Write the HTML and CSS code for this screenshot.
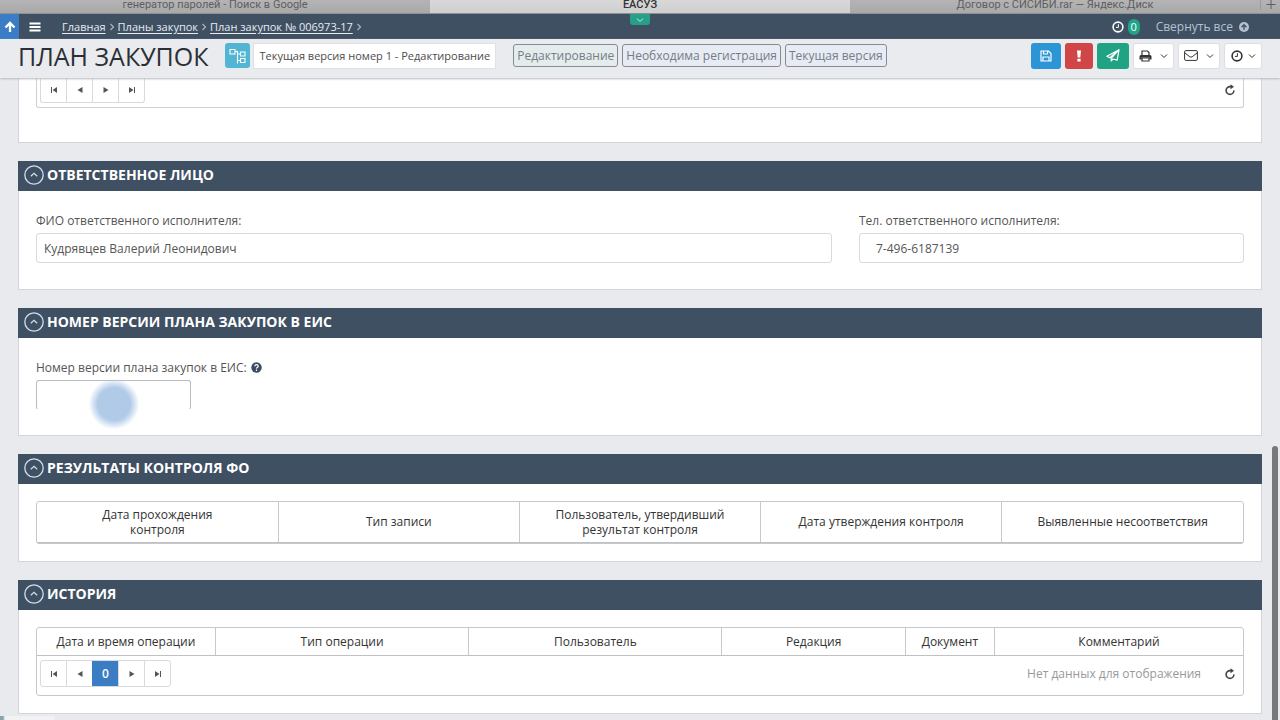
FILE: index.html
```
<!DOCTYPE html>
<html lang="ru">
<head>
<meta charset="utf-8">
<meta name="viewport" content="width=device-width, initial-scale=1">
<title>ЕАСУЗ</title>
<link rel="stylesheet" href="styles.css">
</head>
<body>
<svg class="sprite" aria-hidden="true">
  <symbol id="chev-right" viewBox="0 0 6 8"><path d="M1.5 1l3 3-3 3" fill="none" stroke="currentColor" stroke-width="1.2"/></symbol>
  <symbol id="chev-down" viewBox="0 0 8 6"><path d="M1 1.500l3 3 3-3" fill="none" stroke="currentColor" stroke-width="1"/></symbol>
  <symbol id="clock" viewBox="0 0 12 12"><circle cx="6" cy="6" r="4.900" fill="none" stroke="currentColor" stroke-width="1.600"/><path d="M6.400 3.200v3.200H4" fill="none" stroke="currentColor" stroke-width="1"/></symbol>
  <symbol id="first" viewBox="0 0 8 8"><path d="M1.500 1v6" stroke="currentColor"/><path d="M7 1v6L2.500 4z" fill="currentColor"/></symbol>
  <symbol id="prev" viewBox="0 0 8 8"><path d="M6.500 1v6l-5-3z" fill="currentColor"/></symbol>
  <symbol id="next" viewBox="0 0 8 8"><path d="M1.500 1v6l5-3z" fill="currentColor"/></symbol>
  <symbol id="last" viewBox="0 0 8 8"><path d="M6.500 1v6" stroke="currentColor"/><path d="M1 1v6l4.500-3z" fill="currentColor"/></symbol>
  <symbol id="reload" viewBox="0 0 12 12"><path d="M7.500 2.600H6A3.900 3.900 0 1 0 9.900 6.500" fill="none" stroke="currentColor" stroke-width="1.600"/><path d="M6.500 0.200L10 2.700 6.500 5.200z" fill="currentColor"/></symbol>
  <symbol id="collapse" viewBox="0 0 20 20"><circle cx="10" cy="10" r="9.200" fill="none" stroke="currentColor" stroke-width="1.300"/><path d="M6.800 11.300L10 8.300l3.200 3" fill="none" stroke="currentColor" stroke-width="1.200"/></symbol>
</svg>

<nav class="tabs" aria-label="Вкладки">
  <a class="tab tab-first" href="#">генератор паролей - Поиск в Google</a>
  <a class="tab tab-active" href="#">ЕАСУЗ</a>
  <a class="tab" href="#">Договор с СИСИБИ.rar — Яндекс.Диск</a>
  <button class="tab-add" aria-label="Новая вкладка"><svg width="10" height="10" viewBox="0 0 10 10"><path d="M5 0v9M0.500 4.500h9" stroke="currentColor"/></svg></button>
</nav>

<div class="navbar">
  <button class="to-top" aria-label="Наверх"><svg width="12" height="12" viewBox="0 0 12 12"><path d="M6 11V2.500M1.500 6.500L6 2l4.500 4.500" fill="none" stroke="currentColor" stroke-width="2.300"/></svg></button>
  <button class="burger" aria-label="Меню"><svg width="12" height="12" viewBox="0 0 12 12"><path d="M0.500 2.500h11M0.500 6h11M0.500 9.500h11" stroke="currentColor" stroke-width="1.900"/></svg></button>
  <nav class="crumbs" aria-label="Навигация">
    <a href="#">Главная</a><svg width="6" height="8"><use href="#chev-right"/></svg>
    <a href="#">Планы закупок</a><svg width="6" height="8"><use href="#chev-right"/></svg>
    <a href="#">План закупок № 006973-17</a><svg width="6" height="8"><use href="#chev-right"/></svg>
  </nav>
  <button class="pull" aria-label="Развернуть"><svg width="8" height="6"><use href="#chev-down"/></svg></button>
  <svg class="nav-clock" width="12" height="12"><use href="#clock"/></svg>
  <span class="count">0</span>
  <button class="collapse-all">Свернуть все <svg width="10" height="10" viewBox="0 0 10 10"><circle cx="5" cy="5" r="5" fill="currentColor"/><path d="M5 8V3M2.500 5.200L5 2.700l2.500 2.500" fill="none" stroke="#405063" stroke-width="1.300"/></svg></button>
</div>

<header class="head">
  <h1>ПЛАН ЗАКУПОК</h1>
  <button class="tree" aria-label="Версии"><svg width="18" height="18" viewBox="0 0 18 18"><path d="M1 2.500h5v4.500H1zM11.500 5h4.500v4h-4.500zM11.500 11.500h4.500v4h-4.500zM6 4.500h2.500v12M8.500 7h3M8.500 13.500h3" fill="none" stroke="currentColor" stroke-width="1.100"/></svg></button>
  <button class="version">Текущая версия номер 1 - Редактирование</button>
  <div class="statuses">
    <span class="status status-edit">Редактирование</span>
    <span class="status">Необходима регистрация</span>
    <span class="status">Текущая версия</span>
  </div>
  <div class="tools">
    <button class="tool save" aria-label="Сохранить"><svg width="12" height="12" viewBox="0 0 12 12"><path d="M1 1h7.500L11 3.500V11H1zM3.500 1v3h4V1M3 11V7h6v4" fill="none" stroke="currentColor" stroke-width="1.200"/></svg></button>
    <button class="tool warn" aria-label="Проверить"><svg width="6" height="12" viewBox="0 0 6 12"><path d="M1 0.500h4L4.300 7.500H1.700zM1.400 8.700h3.200v2.800H1.400z" fill="currentColor"/></svg></button>
    <button class="tool send" aria-label="Отправить"><svg width="14" height="13" viewBox="0 0 14 13"><path d="M13 0.700L0.900 7.200l2.800 1.500L13 0.700 5.200 9.300V12l1.700-2L11.200 11.200z" fill="none" stroke="currentColor" stroke-width="1.200" stroke-linejoin="round"/></svg></button>
    <button class="tool print" aria-label="Печать"><svg width="13" height="12" viewBox="0 0 13 12"><path d="M3 5V1h5.500L10 2.500V5M3 8h7v3H3z" fill="none" stroke="currentColor" stroke-width="1.200"/><path d="M2 5h9a1.500 1.500 0 0 1 1.500 1.500V9.500H10.500V7.500h-8V9.500H0.500V6.500A1.500 1.500 0 0 1 2 5z" fill="currentColor"/></svg><svg width="8" height="6"><use href="#chev-down"/></svg></button>
    <button class="tool mail" aria-label="Сообщения"><svg width="14" height="11" viewBox="0 0 14 11"><rect x="0.600" y="0.600" width="12.800" height="9.800" rx="1.200" fill="none" stroke="currentColor"/><path d="M1 3l4.800 3.800q1.200 0.700 2.400 0L13 3" fill="none" stroke="currentColor"/></svg><svg width="8" height="6"><use href="#chev-down"/></svg></button>
    <button class="tool time" aria-label="История"><svg width="12" height="12"><use href="#clock"/></svg><svg width="8" height="6"><use href="#chev-down"/></svg></button>
  </div>
</header>

<main>
  <section class="panel">
    <div class="panel-body body-cut">
      <div class="pager-row pager-row-cut">
        <div class="pager">
          <button aria-label="Первая"><svg width="8" height="8"><use href="#first"/></svg></button>
          <button aria-label="Назад"><svg width="8" height="8"><use href="#prev"/></svg></button>
          <button aria-label="Вперёд"><svg width="8" height="8"><use href="#next"/></svg></button>
          <button aria-label="Последняя"><svg width="8" height="8"><use href="#last"/></svg></button>
        </div>
        <button class="reload" aria-label="Обновить"><svg width="12" height="12"><use href="#reload"/></svg></button>
      </div>
    </div>
  </section>

  <section class="panel">
    <h2><button><svg width="20" height="20"><use href="#collapse"/></svg>ОТВЕТСТВЕННОЕ ЛИЦО</button></h2>
    <div class="panel-body person">
      <div class="field">
        <label for="fio">ФИО ответственного исполнителя:</label>
        <input id="fio" type="text" value="Кудрявцев Валерий Леонидович">
      </div>
      <div class="field">
        <label for="tel">Тел. ответственного исполнителя:</label>
        <input id="tel" class="tel" type="text" value="7-496-6187139">
      </div>
    </div>
  </section>

  <section class="panel">
    <h2><button><svg width="20" height="20"><use href="#collapse"/></svg>НОМЕР ВЕРСИИ ПЛАНА ЗАКУПОК В ЕИС</button></h2>
    <div class="panel-body number">
      <label for="num">Номер версии плана закупок в ЕИС: <svg width="11" height="11" viewBox="0 0 11 11"><circle cx="5.500" cy="5.500" r="5.200" fill="#3d4864"/><path d="M3.800 4.200Q3.900 2.700 5.500 2.700T7.200 4.200Q7.200 5 6.300 5.500T5.500 6.700M5.500 7.600V9" fill="none" stroke="#fff" stroke-width="1.300"/></svg></label>
      <div class="number-box">
        <input id="num" type="text">
        <span class="pointer"></span>
      </div>
    </div>
  </section>

  <section class="panel">
    <h2><button><svg width="20" height="20"><use href="#collapse"/></svg>РЕЗУЛЬТАТЫ КОНТРОЛЯ ФО</button></h2>
    <div class="panel-body">
      <div class="grid">
        <table class="results">
          <tr><th>Дата прохождения<br>контроля</th><th>Тип записи</th><th>Пользователь, утвердивший<br>результат контроля</th><th>Дата утверждения контроля</th><th>Выявленные несоответствия</th></tr>
        </table>
      </div>
    </div>
  </section>

  <section class="panel">
    <h2><button><svg width="20" height="20"><use href="#collapse"/></svg>ИСТОРИЯ</button></h2>
    <div class="panel-body">
      <div class="grid">
        <table class="history">
          <colgroup><col class="c-date"><col class="c-wide"><col class="c-wide"><col class="c-rev"><col class="c-doc"><col></colgroup>
          <tr><th>Дата и время операции</th><th>Тип операции</th><th>Пользователь</th><th>Редакция</th><th>Документ</th><th>Комментарий</th></tr>
        </table>
        <div class="pager-row">
          <div class="pager">
            <button aria-label="Первая"><svg width="8" height="8"><use href="#first"/></svg></button>
            <button aria-label="Назад"><svg width="8" height="8"><use href="#prev"/></svg></button>
            <button class="current">0</button>
            <button aria-label="Вперёд"><svg width="8" height="8"><use href="#next"/></svg></button>
            <button aria-label="Последняя"><svg width="8" height="8"><use href="#last"/></svg></button>
          </div>
          <span class="empty">Нет данных для отображения</span>
          <button class="reload" aria-label="Обновить"><svg width="12" height="12"><use href="#reload"/></svg></button>
        </div>
      </div>
    </div>
  </section>
</main>
<div class="scroll-thumb"></div>
<div class="corner-tip"></div>
</body>
</html>
```
FILE: styles.css
```
* { box-sizing: border-box; }
html { height: 100%; overflow: hidden; }
body {
  position: relative;
  height: 100%;
  margin: 0;
  overflow: hidden;
  display: flex;
  flex-direction: column;
  background: #e8eaee;
  color: #4c4c4c;
  font: 12px/18px "Open Sans", "Noto Sans", sans-serif;
}
button { font: inherit; color: inherit; background: none; border: 0; padding: 0; margin: 0; display: flex; align-items: center; justify-content: center; }
svg { flex: none; }
.sprite { position: absolute; width: 0; height: 0; }

.tabs {
  display: flex;
  flex: none;
  height: 14px;
  overflow: hidden;
  background: linear-gradient(#b4b4b4, #a9a9a9);
  border-bottom: 1px solid #8d9095;
  font: 11px/13px Roboto, "Liberation Sans", sans-serif;
}
.tab { flex: 41 1 0; height: 13px; line-height: 9px; text-align: center; color: #5e5e5e; text-decoration: none; }
.tab-first { flex-grow: 43; }
.tab-active { flex-grow: 42; background: linear-gradient(#d8d8d8, #cfcfcf); color: #333; font-weight: 500; }
.tab-add { width: 20px; height: 10px; color: #5e5e5e; border-left: 1px solid #9a9a9a; }

.navbar {
  position: relative;
  display: flex;
  flex: none;
  align-items: center;
  height: 25px;
  background: #405063;
  color: #fff;
  font-size: 11px;
}
.to-top { width: 19px; height: 25px; background: #3a7dc4; }
.burger { width: 31px; height: 25px; }
.crumbs { display: flex; align-items: center; gap: 3px; margin-left: 12px; margin-right: auto; color: #a9b4c2; }
.crumbs a { color: #e6ebf2; text-decoration: underline; text-underline-offset: 2px; }
.pull { position: absolute; left: 50%; top: 0; width: 20px; height: 11px; margin-left: -10px; background: #26a08a; border-radius: 0 0 3px 3px; color: #c9efe6; }
.count { margin-left: 4px; width: 12px; height: 16px; border-radius: 6px; background: #1fa488; line-height: 16px; text-align: center; }
.collapse-all { gap: 6px; margin-left: 16px; margin-right: 31px; color: #b4c2d2; font-size: 12px; }

.head {
  position: relative;
  display: flex;
  flex: none;
  align-items: center;
  height: 39px;
  padding: 0 18px 6px;
  background: #e9ebef;
  box-shadow: 0 1px 2px #b5b9bf;
}
h1 { margin: 0 17px 0 0; color: #2c2f33; font-size: 25px; line-height: 32px; font-weight: 400; }
.tree { width: 25px; height: 25px; border-radius: 3px; background: #53b5d4; color: #fff; }
.version { height: 26px; margin-left: 3px; padding: 0 5px; background: #fff; border: 1px solid #dfe1e5; font-size: 11px; }
.statuses { display: flex; gap: 4px; margin-left: 17px; }
.status { height: 23px; padding: 0 3px; border: 1px solid #858b96; border-radius: 3px; background: #e7ebf3; color: #767c85; line-height: 21px; }
.status-edit { background: #e4edec; }
.tools { display: flex; gap: 4px; margin-left: auto; }
.tool { height: 26px; gap: 8px; border-radius: 3px; background: #fff; border: 1px solid #dcdee2; color: #333; }
.save { width: 30px; background: #2b95d6; border: 0; color: #fff; }
.warn { width: 28px; background: #d04545; border: 0; color: #fff; }
.send { width: 32px; background: #1fa383; border: 0; color: #fff; }
.print { width: 41px; }
.mail { width: 42px; }
.time { width: 38px; gap: 5px; }

main { display: flex; flex-direction: column; gap: 18px; padding: 0 18px; }
.panel { background: #fff; border: 1px solid #d3d5da; border-top: 0; }
h2 { margin: 0 -1px; height: 30px; display: flex; align-items: center; padding: 0 6px 2px; background: #405063; color: #fff; font-size: 14px; font-weight: 700; }
h2 button { gap: 3px; font-size: 14px; }
h2 svg { color: #d3deee; }
.panel-body { padding: 17px; }
.body-cut { padding: 0 17px 34px; }

.person { display: grid; grid-template-columns: 796fr 385fr; gap: 27px; padding: 21px 17px 26px; }
.field { display: flex; flex-direction: column; gap: 3px; }
label { display: block; color: #555; }
input {
  width: 100%;
  height: 30px;
  padding: 0 7px;
  border: 1px solid #d8dadd;
  border-radius: 3px;
  background: #fff;
  color: #555;
  font: inherit;
}
.tel { padding-left: 16px; }
.number { padding: 21px 17px 25px; }
.number label svg { vertical-align: -1px; margin-left: 1px; }
.number-box { position: relative; width: 155px; margin-top: 3px; }
.number-box input { display: block; height: 30px; border-color: #b9bcc0; border-bottom-color: #fff; }
.pointer { position: absolute; left: 50%; top: -1px; width: 50px; height: 50px; margin-left: -25px; border-radius: 50%; background: radial-gradient(#b0cae8 0 46%, rgba(176, 202, 232, 0) 72%); }

.grid { border: 1px solid #c6c8cb; border-radius: 3px; }
table { width: 100%; table-layout: fixed; border-collapse: collapse; color: #333; }
th { padding: 0; text-align: center; font-weight: 400; line-height: 15px; border-left: 1px solid #c6c8cb; border-bottom: 1px solid #bfc1c4; }
th:first-child { border-left: 0; }
.results th { height: 40px; }
.history th { height: 28px; }
.c-date { width: 14.800%; }
.c-wide { width: 21%; }
.c-rev { width: 15.200%; }
.c-doc { width: 7.400%; }

.pager-row { display: flex; align-items: center; height: 39px; padding: 0 7px 4px 3px; color: #444; }
.pager { display: flex; margin-right: auto; border: 1px solid #d8dadf; border-radius: 3px; color: #555; }
.pager button { width: 26px; height: 25px; border-left: 1px solid #d8dadf; }
.pager button:first-child { width: 25px; border-left: 0; }
.pager .current { background: #3a7dc2; border-color: #3a7dc2; color: #fff; font-weight: 600; }
.empty { margin-right: 23px; color: #999; }
.pager-row-cut { height: 30px; padding: 0 7px 5px 3px; border: 1px solid #cdcfd2; border-top: 0; border-radius: 0 0 3px 3px; }
.pager-row-cut .pager { border-top: 0; border-radius: 0 0 3px 3px; }
.pager-row-cut .pager button { height: 24px; }

.scroll-thumb { position: absolute; right: 2px; top: 62%; bottom: 0; width: 6px; border-radius: 3px 3px 0 0; background: #77787a; }
.corner-tip { position: absolute; left: 0; bottom: 0; width: 55px; height: 4px; border-radius: 0 3px 0 0; background: linear-gradient(90deg, #8ba3ad 0 3px, #f1f2f4 5px); }
```
